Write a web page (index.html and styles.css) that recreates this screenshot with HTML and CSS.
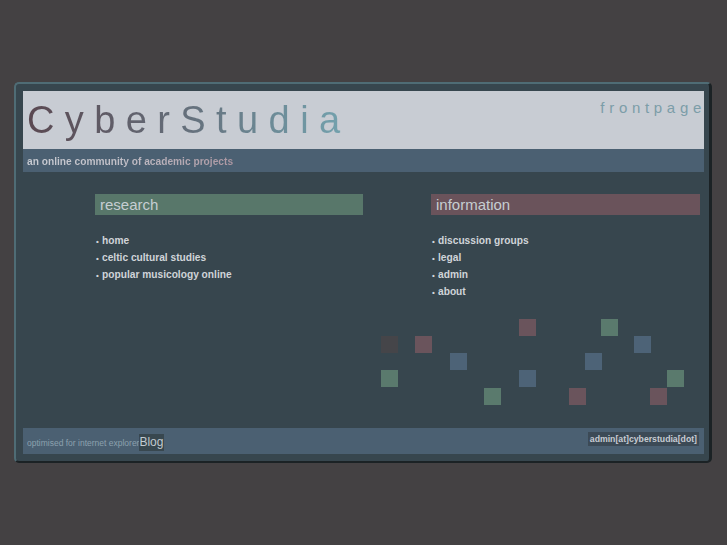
FILE: index.html
```html
<!DOCTYPE html>
<html>
<head>
<meta charset="utf-8">
<title>CyberStudia</title>
<link rel="stylesheet" href="styles.css">
</head>
<body>
<div class="frame">
  <div class="header">
    <h1 class="title">CyberStudia</h1>
    <div class="frontpage">frontpage</div>
  </div>
  <div class="subbar"><span class="tagline">an online community of academic projects</span></div>
  <div class="content">
    <div class="columns">
      <div class="col">
        <h2 class="heading research">research</h2>
        <ul class="links">
          <li>home</li>
          <li>celtic cultural studies</li>
          <li>popular musicology online</li>
        </ul>
      </div>
      <div class="col">
        <h2 class="heading information">information</h2>
        <ul class="links">
          <li>discussion groups</li>
          <li>legal</li>
          <li>admin</li>
          <li>about</li>
        </ul>
      </div>
    </div>
    <div class="sq dark" style="left:358px;top:164px"></div>
    <div class="sq mauve" style="left:392px;top:164px"></div>
    <div class="sq blue" style="left:427px;top:181px"></div>
    <div class="sq green" style="left:358px;top:198px"></div>
    <div class="sq green" style="left:461px;top:216px"></div>
    <div class="sq mauve" style="left:496px;top:147px"></div>
    <div class="sq blue" style="left:496px;top:198px"></div>
    <div class="sq mauve" style="left:546px;top:216px"></div>
    <div class="sq blue" style="left:562px;top:181px"></div>
    <div class="sq green" style="left:578px;top:147px"></div>
    <div class="sq blue" style="left:611px;top:164px"></div>
    <div class="sq green" style="left:644px;top:198px"></div>
    <div class="sq mauve" style="left:627px;top:216px"></div>
  </div>
  <div class="footer">
    <div class="foot-left"><span class="optimised">optimised for internet explorer</span><span class="blog">Blog</span></div>
    <div class="email">admin[at]cyberstudia[dot]</div>
  </div>
</div>
</body>
</html>
```
FILE: styles.css
```css
html, body {
  margin: 0;
  padding: 0;
  background: #444143;
  font-family: "Liberation Sans", Arial, sans-serif;
}

.frame {
  box-sizing: border-box;
  width: 698px;
  margin: 82px 0 0 14px;
  padding: 7px 5px 7px 7px;
  background: #37464e;
  border-style: solid;
  border-width: 2px 3px 2px 2px;
  border-color: #4f6c75 #1b2225 #1b2225 #4f6c75;
  border-radius: 5px;
}

.header {
  box-sizing: border-box;
  height: 58px;
  background: #c8ccd3;
  display: flex;
  justify-content: space-between;
  align-items: flex-start;
  padding: 8px 0 0 4px;
}

.title {
  margin: 0;
  font-size: 38px;
  font-weight: normal;
  line-height: 42px;
  letter-spacing: 10.4px;
  background: linear-gradient(90deg, #5a4851 0%, #65707c 50%, #74a4b0 100%);
  -webkit-background-clip: text;
  background-clip: text;
  color: transparent;
}

.frontpage {
  margin: 0 -2px 0 0;
  font-size: 15px;
  line-height: 17px;
  letter-spacing: 4.7px;
  color: #7c9da8;
}

.subbar {
  box-sizing: border-box;
  height: 23px;
  background: #4b6072;
  padding-left: 4px;
  line-height: 22px;
}

.tagline {
  font-size: 10.2px;
  font-weight: bold;
  background: linear-gradient(90deg, #c9ccd3 0%, #c2c0c8 45%, #ad97a2 100%);
  -webkit-background-clip: text;
  background-clip: text;
  color: transparent;
}

.content {
  position: relative;
  box-sizing: border-box;
  height: 256px;
  padding: 22px 0 0 72px;
}

.columns {
  display: grid;
  grid-template-columns: 268px 269px;
  column-gap: 68px;
}

.heading {
  margin: 0;
  height: 21px;
  box-sizing: border-box;
  padding-left: 5px;
  font-size: 15px;
  font-weight: normal;
  line-height: 21px;
  color: #c6ced2;
}

.research { background: #58776a; }
.information { background: #6a535b; }

.links {
  list-style: none;
  margin: 17px 0 0 0;
  padding: 0 0 0 1px;
  font-size: 10.2px;
  font-weight: bold;
  line-height: 17px;
  color: #d0d4d9;
}

.links li::before {
  content: "\2022";
  display: inline-block;
  width: 6px;
  font-size: 8px;
  line-height: 1;
}

.sq {
  position: absolute;
  width: 17px;
  height: 17px;
}
.sq.dark { background: #454549; }
.sq.mauve { background: #6a545c; }
.sq.green { background: #5a7a6d; }
.sq.blue { background: #4d6377; }

.footer {
  box-sizing: border-box;
  height: 26px;
  background: #4b6072;
  display: flex;
  justify-content: space-between;
  align-items: flex-start;
  padding: 4px 5px 0 4px;
}

.foot-left {
  line-height: 17px;
  white-space: nowrap;
}

.optimised {
  font-size: 8.5px;
  color: #8ba1ae;
}

.blog {
  display: inline-block;
  font-size: 12px;
  line-height: 17px;
  color: #c2cad0;
  background: #38474f;
  padding: 0 1px 0 0;
}

.email {
  margin-top: 0;
  padding: 0 2px;
  font-size: 8.7px;
  font-weight: bold;
  line-height: 14px;
  color: #c8ccd3;
  background: #3c4a56;
}
```
